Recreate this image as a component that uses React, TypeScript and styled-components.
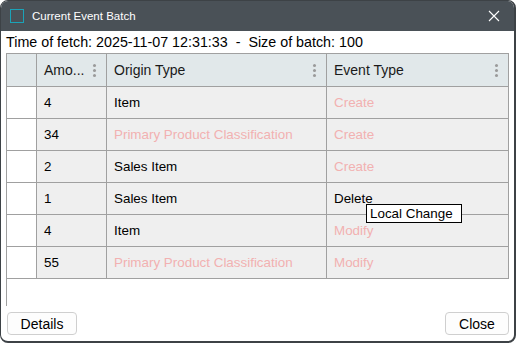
import React from 'react'
import styled, { createGlobalStyle } from 'styled-components'

const GlobalStyle = createGlobalStyle`
  html, body {
    margin: 0;
    padding: 0;
    background: #ffffff;
  }
  * {
    box-sizing: border-box;
  }
`

const Window = styled.div`
  position: relative;
  width: 516px;
  height: 343px;
  display: flex;
  flex-direction: column;
  background: #ffffff;
  border: 1px solid #3d4246;
  border-right-width: 2px;
  border-bottom-width: 2px;
  border-radius: 8px;
  overflow: hidden;
  font-family: 'Liberation Sans', Arial, sans-serif;
  color: #000;
`

const TitleBar = styled.div`
  height: 30px;
  flex: none;
  display: flex;
  align-items: center;
  padding: 0 0 0 9px;
  background: #4a5157;
  color: #ffffff;
  font-size: 11.5px;
`

const AppIcon = styled.div`
  width: 14px;
  height: 14px;
  border: 1.5px solid #1ba3b8;
  margin-right: 8px;
`

const TitleText = styled.span`
  flex: 1;
`

const CloseX = styled.div`
  width: 40px;
  height: 30px;
  display: flex;
  align-items: center;
  justify-content: center;
`

const Body = styled.div`
  flex: 1;
  display: flex;
  flex-direction: column;
  padding: 0 5px 0 5px;
`

const InfoLine = styled.div`
  height: 22px;
  display: flex;
  align-items: center;
  font-size: 14.3px;
  white-space: pre;
`

const TableArea = styled.div`
  height: 253px;
  border-left: 1px solid #a0a0a0;
`

const Grid = styled.table`
  border-collapse: collapse;
  table-layout: fixed;
  width: 502px;
  margin-left: -1px;
  font-size: 13.4px;
`

const HeadCell = styled.th`
  height: 33px;
  padding: 0 0 0 7px;
  background: #e1e8ea;
  border: 1px solid #a0a0a0;
  font-weight: normal;
  text-align: left;
  color: #1a1a1a;
  font-size: 14px;
`

const HeadInner = styled.div`
  display: flex;
  align-items: center;
  justify-content: space-between;
  padding-right: 10px;
`

const Kebab = styled.span`
  display: flex;
  flex-direction: column;
  gap: 2px;
  & > i {
    width: 3px;
    height: 3px;
    border-radius: 50%;
    background: #9a9a9a;
  }
`

const Cell = styled.td<{ $muted?: boolean; $blank?: boolean }>`
  height: 32px;
  padding: 0 0 0 7px;
  border: 1px solid #a0a0a0;
  background: ${(p) => (p.$blank ? '#ffffff' : '#efefef')};
  color: ${(p) => (p.$muted ? '#f2b1b1' : '#000000')};
  white-space: nowrap;
  overflow: hidden;
`

const Tooltip = styled.div`
  position: absolute;
  left: 365px;
  top: 203px;
  width: 96px;
  height: 19px;
  padding-left: 3px;
  background: #ffffff;
  border: 1px solid #000000;
  font-size: 13.4px;
  line-height: 17px;
  white-space: nowrap;
  z-index: 2;
`

const Footer = styled.div`
  display: flex;
  justify-content: space-between;
  padding: 6px 0 0 1px;
`

const Button = styled.button<{ $w: number }>`
  width: ${(p) => p.$w}px;
  height: 23px;
  background: #fdfdfd;
  border: 1px solid #cfcfcf;
  border-radius: 4px;
  font-family: 'Liberation Sans', Arial, sans-serif;
  font-size: 14px;
  color: #000;
  padding: 0;
`

type Row = { amount: number; origin: string; event: string; originMuted: boolean; eventMuted: boolean }

const rows: Row[] = [
  { amount: 4, origin: 'Item', event: 'Create', originMuted: false, eventMuted: true },
  { amount: 34, origin: 'Primary Product Classification', event: 'Create', originMuted: true, eventMuted: true },
  { amount: 2, origin: 'Sales Item', event: 'Create', originMuted: false, eventMuted: true },
  { amount: 1, origin: 'Sales Item', event: 'Delete', originMuted: false, eventMuted: false },
  { amount: 4, origin: 'Item', event: 'Modify', originMuted: false, eventMuted: true },
  { amount: 55, origin: 'Primary Product Classification', event: 'Modify', originMuted: true, eventMuted: true },
]

const Dots = () => (
  <Kebab>
    <i />
    <i />
    <i />
  </Kebab>
)

export default function App() {
  return (
    <>
      <GlobalStyle />
      <Window>
        <TitleBar>
          <AppIcon />
          <TitleText>Current Event Batch</TitleText>
          <CloseX>
            <svg width="12" height="12" viewBox="0 0 12 12">
              <path d="M1 1L11 11M11 1L1 11" stroke="#ffffff" strokeWidth="1.1" />
            </svg>
          </CloseX>
        </TitleBar>
        <Body>
          <InfoLine>Time of fetch: 2025-11-07 12:31:33  -  Size of batch: 100</InfoLine>
          <TableArea>
            <Grid>
              <colgroup>
                <col style={{ width: 30 }} />
                <col style={{ width: 70 }} />
                <col style={{ width: 220 }} />
                <col style={{ width: 182 }} />
              </colgroup>
              <thead>
                <tr>
                  <HeadCell />
                  <HeadCell>
                    <HeadInner>
                      Amo...
                      <Dots />
                    </HeadInner>
                  </HeadCell>
                  <HeadCell>
                    <HeadInner>
                      Origin Type
                      <Dots />
                    </HeadInner>
                  </HeadCell>
                  <HeadCell>
                    <HeadInner>
                      Event Type
                      <Dots />
                    </HeadInner>
                  </HeadCell>
                </tr>
              </thead>
              <tbody>
                {rows.map((r, i) => (
                  <tr key={i}>
                    <Cell $blank />
                    <Cell>{r.amount}</Cell>
                    <Cell $muted={r.originMuted}>{r.origin}</Cell>
                    <Cell $muted={r.eventMuted}>{r.event}</Cell>
                  </tr>
                ))}
              </tbody>
            </Grid>
          </TableArea>
          <Footer>
            <Button $w={70}>Details</Button>
            <Button $w={64}>Close</Button>
          </Footer>
        </Body>
        <Tooltip>Local Change</Tooltip>
      </Window>
    </>
  )
}
